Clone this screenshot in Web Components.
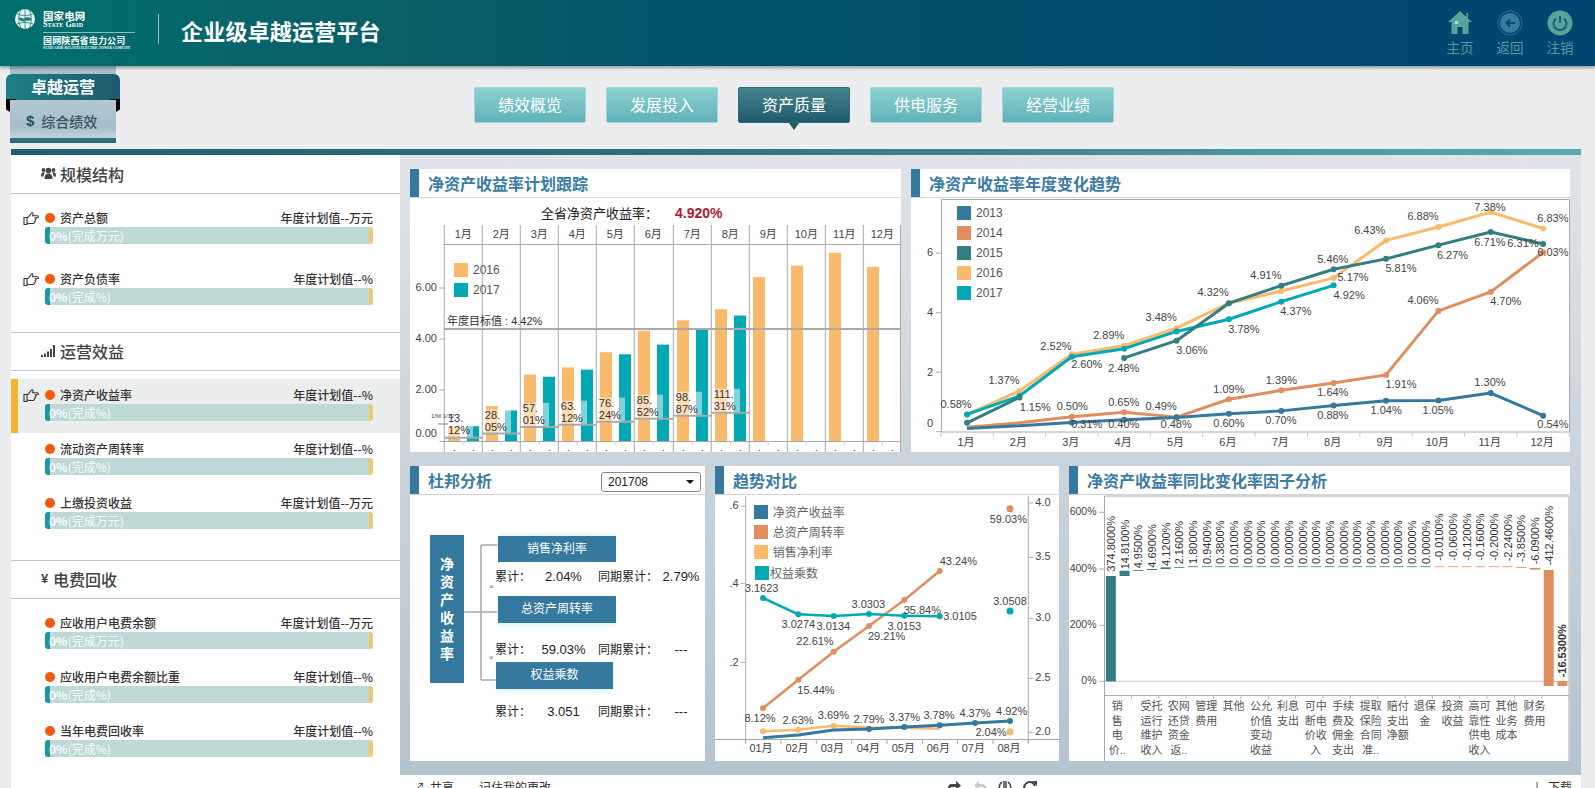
<!DOCTYPE html>
<html lang="zh-CN">
<head>
<meta charset="utf-8">
<title>企业级卓越运营平台</title>
<style>
  html, body { margin: 0; height: 788px; overflow: hidden; }
  body {
    background: #ebedef;
    color: #333;
    font-family: "Liberation Sans", "Noto Sans CJK SC", sans-serif;
    font-size: 12px;
  }
</style>
</head>
<body>
<app-header>
  <header-action icon="home">主页</header-action>
  <header-action icon="back">返回</header-action>
  <header-action icon="power">注销</header-action>
</app-header>

<top-bar>
  <side-ribbon slot="ribbon"></side-ribbon>
  <tab-button>绩效概览</tab-button>
  <tab-button>发展投入</tab-button>
  <tab-button active>资产质量</tab-button>
  <tab-button>供电服务</tab-button>
  <tab-button>经营业绩</tab-button>
</top-bar>

<page-body>
  <div slot="side">
    <kpi-section icon="group" style="--pad-top:1px;--pad-bottom:15px;--gap:7px">
      规模结构
      <kpi-item slot="items" hand name="资产总额" unit="万元"></kpi-item>
      <kpi-item slot="items" hand name="资产负债率" unit="%"></kpi-item>
    </kpi-section>
    <kpi-section icon="signal" style="--pad-bottom:19px">
      运营效益
      <kpi-item slot="items" hand active name="净资产收益率" unit="%"></kpi-item>
      <kpi-item slot="items" name="流动资产周转率" unit="%"></kpi-item>
      <kpi-item slot="items" name="上缴投资收益" unit="万元"></kpi-item>
    </kpi-section>
    <kpi-section icon="yen" style="--pad-bottom:0px">
      电费回收
      <kpi-item slot="items" name="应收用户电费余额" unit="万元"></kpi-item>
      <kpi-item slot="items" name="应收用户电费余额比重" unit="%"></kpi-item>
      <kpi-item slot="items" name="当年电费回收率" unit="%"></kpi-item>
    </kpi-section>
  </div>

  <chart-row style="--gap:10px">
    <chart-panel style="width:491px">
      <span slot="title">净资产收益率计划跟踪</span>
      <plan-chart></plan-chart>
    </chart-panel>
    <chart-panel style="width:659px">
      <span slot="title">净资产收益率年度变化趋势</span>
      <trend-chart></trend-chart>
    </chart-panel>
  </chart-row>
  <chart-row style="--gap:10px">
    <chart-panel style="width:295px">
      <span slot="title">杜邦分析</span>
      <period-select slot="tools">201708</period-select>
      <dupont-tree></dupont-tree>
    </chart-panel>
    <chart-panel style="width:344px">
      <span slot="title">趋势对比</span>
      <compare-chart></compare-chart>
    </chart-panel>
    <chart-panel style="width:501px">
      <span slot="title">净资产收益率同比变化率因子分析</span>
      <factor-chart></factor-chart>
    </chart-panel>
  </chart-row>
  <page-footer slot="footer"></page-footer>
</page-body>

<script>
// small helpers for the svg charts
const ORANGE = '#f9ba6b', TEAL = '#00a9b3', BLUE = '#35799f', BRICK = '#e08e5f', PINE = '#337e83';

function txt(x, y, s, o = {}) {
  const attrs = [
    `x="${x}"`, `y="${y}"`,
    `text-anchor="${o.anchor || 'middle'}"`,
    `font-size="${o.size || 11}"`,
    `fill="${o.fill || '#444'}"`,
    o.weight ? `font-weight="${o.weight}"` : '',
    o.rotate ? `transform="rotate(${o.rotate} ${x} ${y})"` : ''
  ].join(' ');
  return `<text ${attrs}>${s}</text>`;
}
const line = (x1, y1, x2, y2, c = '#aaa', w = 1) =>
  `<line x1="${x1}" y1="${y1}" x2="${x2}" y2="${y2}" stroke="${c}" stroke-width="${w}"/>`;
const rect = (x, y, w, h, c, extra = '') =>
  `<rect x="${x}" y="${y}" width="${w}" height="${h}" fill="${c}" ${extra}/>`;
const poly = (pts, c, w = 3) =>
  `<polyline points="${pts.map(p => p.join(',')).join(' ')}" fill="none" stroke="${c}" stroke-width="${w}" stroke-linejoin="round"/>`;
const dots = (pts, c, r = 3.5) =>
  pts.map(p => `<circle cx="${p[0]}" cy="${p[1]}" r="${r}" fill="${c}"/>`).join('');

const svgStyle = `
  :host { display: block; }
  svg { display: block; font-family: "Liberation Sans", "Noto Sans CJK SC", sans-serif; }
  text { dominant-baseline: central; }
`;

const ICONS = {
  home: `<svg width="26" height="26" viewBox="0 0 26 26"><path d="M13 1 1 12h3.500v12h6v-7h5v7h6V12H25l-4-3.600V3h-1.600v3.900z" fill="#5aa39b"/><rect x="8" y="11" width="3" height="3" fill="#a6e0d8"/></svg>`,
  back: `<svg width="26" height="26" viewBox="0 0 26 26"><circle cx="13" cy="13" r="12" fill="none" stroke="#2f6f92"/><circle cx="13" cy="13" r="10" fill="#3a7a9c"/><path d="M18 13H10M13 9.500 9.500 13l3.500 3.500" fill="none" stroke="#0d4a70" stroke-width="2"/></svg>`,
  power: `<svg width="26" height="26" viewBox="0 0 26 26"><circle cx="13" cy="13" r="12.500" fill="#5aa39b"/><path d="M9 8.500a6.500 6.500 0 1 0 8 0" fill="none" stroke="#14627a" stroke-width="2"/><path d="M13 6v7" stroke="#14627a" stroke-width="2"/></svg>`,
  group: `<svg width="15" height="13" viewBox="0 0 15 13"><g fill="#444"><circle cx="7.500" cy="3.500" r="2.800"/><path d="M3.500 12c0-3 1-5.500 4-5.500s4 2.500 4 5.500z"/><circle cx="2.500" cy="3" r="1.900"/><circle cx="12.500" cy="3" r="1.900"/><path d="M0 9c0-2 .6-3.800 2.500-3.800.5 0 1 .2 1.300.4C3 6.800 2.600 8 2.500 9.500H0zM15 9c0-2-.6-3.800-2.500-3.800-.5 0-1 .2-1.300.4.8 1.200 1.200 2.400 1.300 3.900H15z"/></g></svg>`,
  signal: `<svg width="15" height="12" viewBox="0 0 15 12"><g fill="#444"><rect x="0" y="10" width="2" height="2"/><rect x="3" y="8.500" width="2" height="3.500"/><rect x="6" y="6.500" width="2" height="5.500"/><rect x="9" y="4" width="2" height="8"/><rect x="12" y="0" width="2" height="12"/></g></svg>`
};

class AppHeader extends HTMLElement {
  constructor() {
    super();
    this.attachShadow({ mode: 'open' });
    this.shadowRoot.innerHTML = `
      <style>
        :host {
          display: flex; height: 66px; position: relative; z-index: 2;
          background: linear-gradient(90deg, #006f6e 0%, #0a5e67 25%, #01506b 50%, #004570 100%);
          box-shadow: 0 2px 3px rgba(0,0,0,.35);
          color: #fff; padding-left: 15px; box-sizing: border-box;
        }
        .logo { margin-top: 9px; }
        .brand { width: 92px; margin-left: 8px; display: flex; flex-direction: column; font-family: "Noto Sans CJK SC", sans-serif; }
        .cn { font-size: 10.500px; font-weight: 700; line-height: 11px; margin-top: 10px; letter-spacing: .1px; }
        .en { font: 700 8px/8px "Liberation Serif", serif; font-variant: small-caps; letter-spacing: .1px; }
        .rule { border-top: 1px solid rgba(255,255,255,.55); margin-top: 3px; }
        .co { font-size: 9px; font-weight: 700; line-height: 11px; margin-top: 2px; letter-spacing: .15px; white-space: nowrap; }
        .co-en { font: 700 3.400px/5px "Liberation Serif", serif; white-space: nowrap; }
        .sep { width: 1px; height: 30px; margin: 14px 22px 0 23px; background: rgba(255,255,255,.6); }
        h1 { margin: 15px 0 0; font: 700 22px/30px "Noto Sans CJK SC", sans-serif; letter-spacing: .2px; }
        .actions { margin-left: auto; padding-right: 10px; display: flex; }
      </style>
      <svg class="logo" width="20" height="20" viewBox="0 0 20 20">
        <circle cx="10" cy="10" r="10" fill="#e8f2ef"/>
        <path d="M10 0v20M2 5c5 2 11 2 16 0M2 15c5-2 11-2 16 0M6 1c-3 5-3 13 0 18M14 1c3 5 3 13 0 18" fill="none" stroke="#1e7f7d" stroke-width=".8"/>
        <path d="M3 9c3-2 5 2 7 0s4-1 7 1c-3 3-5 1-7 2s-4 1-7-3z" fill="#1e7f7d"/>
      </svg>
      <div class="brand">
        <span class="cn">国家电网</span>
        <span class="en">State Grid</span>
        <span class="rule"></span>
        <span class="co">国网陕西省电力公司</span>
        <span class="co-en">STATE GRID SHAANXI ELECTRIC POWER COMPANY</span>
      </div>
      <span class="sep"></span>
      <h1>企业级卓越运营平台</h1>
      <div class="actions"><slot></slot></div>
    `;
  }
}
customElements.define('app-header', AppHeader);

class HeaderAction extends HTMLElement {
  constructor() {
    super();
    this.attachShadow({ mode: 'open' });
  }
  connectedCallback() {
    this.shadowRoot.innerHTML = `
      <style>
        :host { display: flex; flex-direction: column; align-items: center; width: 50px; padding-top: 10px; box-sizing: border-box;
          color: #4f9d9d; font: 13.500px/18px "Noto Sans CJK SC", sans-serif; }
        svg { display: block; margin-bottom: 2px; }
      </style>
      ${ICONS[this.getAttribute('icon')]}
      <slot></slot>
    `;
  }
}
customElements.define('header-action', HeaderAction);

class TopBar extends HTMLElement {
  constructor() {
    super();
    this.attachShadow({ mode: 'open' });
    this.shadowRoot.innerHTML = `
      <style>
        :host { display: flex; height: 83px; }
        .ribbon { width: 120px; flex: none; }
        nav { display: flex; gap: 20px; margin: 21px 0 0 354px; }
      </style>
      <div class="ribbon"><slot name="ribbon"></slot></div>
      <nav><slot></slot></nav>
    `;
  }
}
customElements.define('top-bar', TopBar);

class SideRibbon extends HTMLElement {
  constructor() {
    super();
    this.attachShadow({ mode: 'open' });
    this.shadowRoot.innerHTML = `
      <style>
        :host { display: block; margin-left: 6px; width: 114px; font-family: "Noto Sans CJK SC", sans-serif; }
        .fold { height: 8px; margin: 0 4px; background: #a7bfc8; }
        .tab {
          position: relative; height: 36px; border-radius: 6px 6px 0 0;
          background: linear-gradient(90deg, #1d8086, #1f5a6c);
          color: #fff; font-size: 16px; font-weight: 700; text-align: center; line-height: 25px;
        }
        .tab::before, .tab::after {
          content: ''; position: absolute; bottom: -2px; width: 10px; height: 13px; background: #000; border-radius: 0 0 6px 6px;
        }
        .tab::before { left: 0; }
        .tab::after { right: 0; }
        .sub {
          position: relative; margin: -10px 4px 0; height: 43px; box-sizing: border-box; padding: 0 0 2px 16px;
          display: flex; align-items: center; gap: 7px;
          background: linear-gradient(180deg, #b3c7d3 0, #a7bfcb 65%, #c5d4db 88%, #1f7b84 88%, #27657a 100%);
          color: #3c5560; font-size: 14px; font-weight: 500;
        }
        .sub b { font: 700 15px "Liberation Sans", sans-serif; color: #24505f; }
      </style>
      <div class="fold"></div>
      <div class="tab">卓越运营</div>
      <div class="sub"><b>$</b><span>综合绩效</span></div>
    `;
  }
}
customElements.define('side-ribbon', SideRibbon);

class TabButton extends HTMLElement {
  constructor() {
    super();
    this.attachShadow({ mode: 'open' });
    this.shadowRoot.innerHTML = `
      <style>
        :host {
          display: block; position: relative; width: 112px; height: 36px; box-sizing: border-box;
          background: linear-gradient(180deg, #8cd2d4, #61b1b6);
          border: 1px solid #a0d6d8; border-radius: 2px;
          color: #fff; font: 16px/33px "Noto Sans CJK SC", sans-serif; text-align: center;
        }
        :host([active]) { background: linear-gradient(180deg, #46848f, #1f5a6a); border-color: #2e6a78; }
        :host([active])::after {
          content: ''; position: absolute; left: 50%; bottom: -8px; margin-left: -5px;
          border: 5px solid transparent; border-bottom: 0; border-top: 7px solid #1f5a6a;
        }
      </style>
      <slot></slot>
    `;
  }
}
customElements.define('tab-button', TabButton);

class PageBody extends HTMLElement {
  constructor() {
    super();
    this.attachShadow({ mode: 'open' });
    this.shadowRoot.innerHTML = `
      <style>
        :host { display: block; margin-left: 11px; width: 1570px; }
        .accent { height: 6px; background: linear-gradient(90deg, #1f5f70, #2f6f7c 40%, #5aabab); }
        .cols { display: flex; height: 633px; }
        .side { width: 389px; flex: none; background: #fff; height: 100%; }
        .main { flex: 1; min-width: 0; display: flex; flex-direction: column; }
        .board {
          height: 620px; box-sizing: border-box; padding: 14px 11px 14px 10px;
          display: flex; flex-direction: column; gap: 14px;
          background: linear-gradient(180deg, #e0e4e8, #b5c3ce);
        }
      </style>
      <div class="accent"></div>
      <div class="cols">
        <div class="side"><slot name="side"></slot></div>
        <div class="main">
          <div class="board"><slot></slot></div>
          <slot name="footer"></slot>
        </div>
      </div>
    `;
  }
}
customElements.define('page-body', PageBody);

class KpiSection extends HTMLElement {
  constructor() {
    super();
    this.attachShadow({ mode: 'open' });
  }
  connectedCallback() {
    const kind = this.getAttribute('icon');
    const icon = kind === 'yen' ? '<b class="yen">¥</b>' : ICONS[kind];
    this.shadowRoot.innerHTML = `
      <style>
        :host { display: block; padding: var(--pad-top, 0) 0 var(--pad-bottom, 0); border-bottom: 1px solid #bcc8cc; }
        :host(:last-child) { border-bottom: 0; }
        h2 {
          margin: 0; height: 38px; box-sizing: border-box; padding: 0 0 2px 30px; display: flex; align-items: center; gap: 4px;
          border-bottom: 1px solid #bcc8cc; color: #444; font: 500 16px/22px "Noto Sans CJK SC", sans-serif;
        }
        .yen { font: 700 13px "Liberation Sans", sans-serif; width: 9px; margin-right: -1px; }
        .items { display: flex; flex-direction: column; gap: var(--gap, 0); padding-top: 8px; }
      </style>
      <h2>${icon}<slot></slot></h2>
      <div class="items"><slot name="items"></slot></div>
    `;
  }
}
customElements.define('kpi-section', KpiSection);

class KpiItem extends HTMLElement {
  constructor() {
    super();
    this.attachShadow({ mode: 'open' });
  }
  connectedCallback() {
    const name = this.getAttribute('name');
    const unit = this.getAttribute('unit');
    const hand = this.hasAttribute('hand') ? `<svg width="16" height="14" viewBox="0 0 16 14"><path d="M1 6.500h3v7H1zM4 7c2-.5 3-3 4-4.500C8.700 1.300 10.300 1.500 10 3.200L9.600 4.700h4.700c1.500 0 1.500 2.100 0 2.100h-1.800c.8.700.5 1.800-.3 2 .5.800 0 1.800-.8 1.900.2.900-.3 1.800-1.400 1.800H7c-1.200 0-2-.5-3-.5z" fill="none" stroke="#333" stroke-width="1.100"/></svg>` : '';
    this.shadowRoot.innerHTML = `
      <style>
        :host {
          display: block; height: 54px; box-sizing: border-box; padding: 7px 27px 0 0;
          font: 500 12px/18px "Noto Sans CJK SC", sans-serif; color: #333;
        }
        :host([active]) { background: #eceeee; box-shadow: inset 7px 0 0 #fcb130; }
        .row { display: flex; align-items: center; height: 18px; }
        .hand { width: 22px; margin-left: 12px; flex: none; display: flex; }
        .dot { width: 10px; height: 10px; border-radius: 50%; background: #f05a0e; margin-right: 5px; }
        .plan { margin-left: auto; }
        .bar {
          margin-left: 34px; height: 17px; border-radius: 3px; padding-left: 4px;
          background:
            linear-gradient(90deg, #1a97a0 5px, transparent 5px),
            linear-gradient(270deg, #f0c870 4px, transparent 4px),
            #bfd9d6;
          color: #f7fcfb; font-weight: 400; line-height: 18px;
        }
      </style>
      <div class="row">
        <span class="hand">${hand}</span>
        <span class="dot"></span>
        <span>${name}</span>
        <span class="plan">年度计划值--${unit}</span>
      </div>
      <div class="bar"><b>0%</b>(完成${unit})</div>
    `;
  }
}
customElements.define('kpi-item', KpiItem);

class ChartRow extends HTMLElement {
  constructor() {
    super();
    this.attachShadow({ mode: 'open' });
    this.shadowRoot.innerHTML = `
      <style>:host { display: flex; gap: var(--gap, 10px); }</style>
      <slot></slot>
    `;
  }
}
customElements.define('chart-row', ChartRow);

class ChartPanel extends HTMLElement {
  constructor() {
    super();
    this.attachShadow({ mode: 'open' });
    this.shadowRoot.innerHTML = `
      <style>
        :host { display: block; flex: none; background: #fff; box-sizing: border-box; }
        header {
          height: 29px; box-sizing: border-box; border-bottom: 1px solid #cfd6da;
          display: flex; align-items: flex-start;
        }
        .mark { width: 9px; height: 28px; background: ${BLUE}; flex: none; }
        h3 { margin: 0 0 0 9px; font: 700 16px/29px "Noto Sans CJK SC", sans-serif; color: #3c7ca3; }
        .tools { margin-left: auto; padding: 6px 4px 0 0; }
      </style>
      <header>
        <span class="mark"></span>
        <h3><slot name="title"></slot></h3>
        <div class="tools"><slot name="tools"></slot></div>
      </header>
      <slot></slot>
    `;
  }
}
customElements.define('chart-panel', ChartPanel);

class PeriodSelect extends HTMLElement {
  constructor() {
    super();
    this.attachShadow({ mode: 'open' });
    this.shadowRoot.innerHTML = `
      <style>
        :host {
          display: flex; align-items: center; justify-content: space-between;
          width: 100px; height: 20px; box-sizing: border-box; padding: 0 6px;
          border: 1px solid #888; border-radius: 3px; background: #fff;
          font: 12px "Liberation Sans", sans-serif; color: #222;
        }
        i { border: 4px solid transparent; border-top: 4px solid #111; border-bottom: 0; }
      </style>
      <slot></slot><i></i>
    `;
  }
}
customElements.define('period-select', PeriodSelect);

class PlanChart extends HTMLElement {
  constructor() {
    super();
    this.attachShadow({ mode: 'open' });
    const col = [34.3, 72.3, 110.3, 148.3, 186.3, 224.3, 263.3, 301.3, 339.3, 377.3, 415.3, 453.3, 490.5];
    const y0 = 243, k = 25.5;
    const v16 = [0.58, 1.37, 2.60, 2.89, 3.48, 4.32, 4.73, 5.17, 6.43, 6.88, 7.38, 6.83];
    const v17 = [0.58, 1.2, 2.52, 2.80, 3.40, 3.78, 4.37, 4.92];
    const progress = [null, ['28.', '05%'], ['57.', '01%'], ['63.', '12%'], ['76.', '24%'], ['85.', '52%'], ['98.', '87%'], ['111.', '31%']];
    const barY = [239.700, 235.600, 229, 226.700, 223.700, 220.700, 217.700, 214.700];
    let s = '';
    // bars
    v16.forEach((v, i) => { s += rect(col[i] + 3.7, y0 - v * k, 12, v * k, ORANGE); });
    v17.forEach((v, i) => { s += rect(col[i] + 22.7, y0 - v * k, 12, v * k, TEAL); });
    // grid
    col.forEach(x => { s += line(x, 27, x, 254); });
    s += line(34, 46.5, 491, 46.5);
    s += line(34, 243.5, 491, 243.5);
    col.slice(0, 12).forEach((x, i) => {
      s += txt(x + 19, 36, `${i + 1}月`);
      s += line(x + 19, 243, x + 19, 247, '#ccc');
      s += txt(x + 10, 249, '.', { size: 10 }) + txt(x + 29, 249, '.', { size: 10 });
    });
    // y axis
    [[6, '6.00'], [4, '4.00'], [2, '2.00']].forEach(([v, l]) => {
      s += txt(27, y0 - v * k - 1, l, { anchor: 'end' });
      s += line(29.500, y0 - v * k, 34, y0 - v * k);
    });
    s += txt(27, 235, '0.00', { anchor: 'end' });
    s += line(29.500, 243.5, 34, 243.5);
    // progress of each month against the target
    barY.forEach((y, i) => {
      s += rect(col[i] + 3.7, y - 24, 25, 24, '#fff', 'opacity=".5"');
      s += line(col[i], y, col[i + 1], y, '#aaa', 2);
      if (progress[i]) {
        s += txt(col[i] + 2.500, y - 19, progress[i][0], { anchor: 'start', fill: '#333' });
        s += txt(col[i] + 2.500, y - 7, progress[i][1], { anchor: 'start', fill: '#333' });
      }
    });
    s += txt(38, 220, '13.', { anchor: 'start', fill: '#333' }) + txt(38, 232, '12%', { anchor: 'start', fill: '#333' });
    s += txt(21, 217.500, '1/M 1/12', { anchor: 'start', size: 6 });
    s += line(28, 226, 38, 226, '#888');
    // target line
    s += line(34, 131, 491, 131, '#aaa', 2);
    s += txt(37, 123, '年度目标值 : 4.42%', { anchor: 'start', size: 11, fill: '#333' });
    // header + legend
    s += txt(131, 15, '全省净资产收益率：', { anchor: 'start', size: 13, fill: '#222' });
    s += txt(265, 15, '4.920%', { anchor: 'start', size: 14, weight: 700, fill: '#b5182e' });
    s += rect(44, 65, 14, 14, ORANGE) + txt(63, 72, '2016', { anchor: 'start', size: 12, fill: '#555' });
    s += rect(44, 85, 14, 14, TEAL) + txt(63, 92, '2017', { anchor: 'start', size: 12, fill: '#555' });
    this.shadowRoot.innerHTML = `<style>${svgStyle}</style><svg width="491" height="254" viewBox="0 0 491 254">${s}</svg>`;
  }
}
customElements.define('plan-chart', PlanChart);

class TrendChart extends HTMLElement {
  constructor() {
    super();
    this.attachShadow({ mode: 'open' });
    const X = i => 56.06 + 52.37 * i;
    const Y = v => 233.700 - 29.75 * v;
    const pts = (arr, from = 0) => arr.map((v, i) => [X(i + from), Y(v)]);
    let s = '';
    s += line(30.5, 1.5, 658.5, 1.5) + line(30.5, 1.5, 30.5, 234) + line(658.5, 1.5, 658.5, 234) + line(30.5, 234, 658.5, 234);
    [[6, 54.3], [4, 113.7], [2, 173.7], [0, 225]].forEach(([v, y]) => {
      s += txt(22, y, v, { anchor: 'end' });
      s += line(25, Y(v), 30.5, Y(v));
    });
    for (let i = 0; i <= 12; i++) {
      const x = X(i) - 26.2;
      s += line(x, 234, x, 239, '#ccc');
    }
    for (let i = 0; i < 12; i++) s += txt(X(i) - 1, 244, `${i + 1}月`);

    const y13 = pts([.11, .2, .31, .40, .48, .60, .70, .88, 1.04, 1.05, 1.30, .54]);
    const y14 = pts([.15, .3, .50, .65, .49, 1.09, 1.39, 1.64, 1.91, 4.06, 4.70, 6.03]);
    const y15a = pts([.3, 1.15]);
    const y15b = pts([2.48, 3.06, 4.32, 4.91, 5.46, 5.81, 6.27, 6.71, 6.31], 3);
    const y16 = pts([.58, 1.37, 2.60, 2.89, 3.48, 4.32, 4.73, 5.17, 6.43, 6.88, 7.38, 6.83]);
    const y17 = pts([.58, 1.2, 2.52, 2.79, 3.37, 3.78, 4.37, 4.92]);
    s += poly(y16, ORANGE) + dots(y16, ORANGE, 3);
    s += poly(y17, TEAL) + dots(y17, TEAL, 3);
    s += poly(y14, BRICK) + dots(y14.filter((p, i) => i !== 1 && i !== 0), BRICK, 3);
    s += poly(y15a, PINE) + dots(y15a, PINE, 3);
    s += poly(y15b, PINE) + dots(y15b, PINE, 3);
    s += poly(y13, BLUE) + dots(y13.filter((p, i) => i > 1), BLUE, 3);

    const labels = [
      ['0.58%',116,718],['1.37%',225,646],['1.15%',296,726],['0.50%',380,723],['2.52%',343,543],['2.60%',413,597],['0.31%',413,777],
      ['2.89%',463,510],['0.65%',497,711],['2.48%',497,609],['0.40%',497,777],['3.48%',582,456],['0.49%',582,723],['3.06%',652,555],
      ['0.48%',616,777],['4.32%',700,381],['1.09%',736,672],['3.78%',770,491],['0.60%',736,775],['4.91%',820,330],['1.39%',855,645],
      ['4.37%',888,438],['0.70%',854,765],['5.46%',972,282],['5.17%',1018,336],['4.92%',1009,390],['1.64%',972,681],['0.88%',972,750],
      ['6.43%',1056,195],['5.81%',1127,309],['1.91%',1127,657],['1.04%',1093,735],['6.88%',1177,153],['6.27%',1244,270],['4.06%',1177,405],
      ['1.05%',1211,735],['7.38%',1329,126],['6.71%',1329,231],['4.70%',1365,408],['1.30%',1329,651],['6.83%',1472,159],['6.31%',1404,234],
      ['6.03%',1472,261],['0.54%',1472,777]
    ];
    labels.forEach(([t, zx, zy]) => { s += txt(zx / 2.272 - 6, zy / 3 - 33, t); });

    [['2013', BLUE], ['2014', BRICK], ['2015', PINE], ['2016', ORANGE], ['2017', TEAL]].forEach(([t, c], i) => {
      s += rect(46, 8 + i * 20, 14, 14, c) + txt(65, 15 + i * 20, t, { anchor: 'start', size: 12, fill: '#555' });
    });
    this.shadowRoot.innerHTML = `<style>${svgStyle}</style><svg width="659" height="254" viewBox="0 0 659 254">${s}</svg>`;
  }
}
customElements.define('trend-chart', TrendChart);

class DupontTree extends HTMLElement {
  constructor() {
    super();
    this.attachShadow({ mode: 'open' });
    const stat = (top, a, b) => `
      <div class="stat" style="top:${top}px">
        <span>累计：</span><span class="num">${a}</span><span class="l2">同期累计：</span><span class="num">${b}</span>
      </div>`;
    this.shadowRoot.innerHTML = `
      <style>
        :host { display: block; position: relative; height: 266px; font: 12px "Liberation Sans", "Noto Sans CJK SC", sans-serif; color: #222; }
        .root {
          position: absolute; left: 20px; top: 40px; width: 34px; height: 148px; background: ${BLUE};
          color: #fff; font-weight: 700; font-size: 14px; line-height: 18px; text-align: center;
          display: flex; align-items: center; justify-content: center; padding: 0 10px; box-sizing: border-box;
        }
        .node {
          position: absolute; height: 26px; line-height: 26px; text-align: center; color: #fff; background: ${BLUE};
          box-shadow: 0 -3px 3px #e6f8fb;
        }
        .node.low { box-shadow: 0 3px 3px #dff6fa; }
        .stat { position: absolute; left: 85px; height: 18px; line-height: 18px; display: grid; grid-template-columns: 40px 57px 70px 38px; white-space: nowrap; }
        .num { font-size: 13px; text-align: center; }
        .l2 { padding-left: 6px; }
        .x { position: absolute; left: 79px; font-size: 8px; line-height: 8px; color: #666; }
        svg { position: absolute; left: 0; top: 0; }
      </style>
      <svg width="100" height="200" viewBox="0 0 100 200">
        <path d="M54 117H71M71 50V185M71 50H88M71 185H86M71 117H88" fill="none" stroke="#aaa" stroke-width="1.500"/>
      </svg>
      <div class="root"><span>净资产收益率</span></div>
      <div class="node" style="left:88px;top:41px;width:118px">销售净利率</div>
      <div class="node low" style="left:88px;top:101px;width:118px;height:27px;line-height:27px">总资产周转率</div>
      <div class="node low" style="left:86px;top:167px;width:117px;height:27px;line-height:27px">权益乘数</div>
      ${stat(73, '2.04%', '2.79%')}
      ${stat(146, '59.03%', '---')}
      ${stat(208, '3.051', '---')}
      <span class="x" style="top:88px">×</span>
      <span class="x" style="top:159px">×</span>
    `;
  }
}
customElements.define('dupont-tree', DupontTree);

class CompareChart extends HTMLElement {
  constructor() {
    super();
    this.attachShadow({ mode: 'open' });
    const P = (zx, zy) => [zx / 3 - 5, zy / 3 - 35];
    const xs = [159, 265, 371, 477, 583, 689, 795, 900];
    const ser = (ys) => ys.map((y, i) => P(xs[i], y));
    let s = '';
    s += line(30.7, 1, 30.7, 248) + line(313.3, 1, 313.3, 248) + line(0, 244.5, 344, 244.5);
    [['.6', 135, 138], ['.4', 368, 370], ['.2', 605, 607]].forEach(([t, ly, ty]) => {
      s += txt(19, ly / 3 - 35, t, { anchor: 'middle' }) + line(26, ty / 3 - 35, 30.7, ty / 3 - 35);
    });
    [['4.0', 126], ['3.5', 289], ['3.0', 472], ['2.5', 652], ['2.0', 814]].forEach(([t, y]) => {
      s += txt(328, y / 3 - 35, t) + line(313.3, y / 3 - 34, 318, y / 3 - 34);
    });
    for (let i = 0; i <= 8; i++) { const x = 107 + 106 * i; s += line(x / 3 - 5, 244, x / 3 - 5, 249); }
    ['01月', '02月', '03月', '04月', '05月', '06月', '07月', '08月'].forEach((t, i) => {
      s += txt([153, 261, 367, 475, 580, 685, 790, 897][i] / 3 - 5, 252.500, t);
    });
    const light = ser([814, 809, 797, 803, 803, 806]);
    const brick = ser([745, 659, 575, 498, 420, 333]);
    const teal = ser([414, 463, 468, 462, 467, 469]);
    const blue = ser([833, 825, 810, 807, 801, 796, 789, 783]);
    s += poly(light, ORANGE, 2.5) + dots(light.slice(0, 3), ORANGE, 3) + dots([P(900, 815)], ORANGE, 3.5);
    s += poly(brick, BRICK, 2.5) + dots(brick, BRICK, 3) + dots([P(900, 146)], BRICK, 3.5);
    s += poly(teal, TEAL, 2.5) + dots(teal, TEAL, 3) + dots([P(900, 453)], TEAL, 3.5);
    s += poly(blue, BLUE, 3) + dots(blue.slice(3), BLUE, 3);
    const labels = [
      ['8.12%',150,775],['2.63%',264,780],['3.69%',370,765],['2.79%',477,777],['3.37%',583,771],['3.78%',687,765],['4.37%',795,760],
      ['4.92%',905,753],['2.04%',843,816],['15.44%',318,690],['22.61%',315,544],['29.21%',530,528],['35.84%',637,450],['43.24%',745,303],
      ['59.03%',895,178],['3.1623',155,384],['3.0274',265,492],['3.0134',370,498],['3.0303',475,432],['3.0153',583,497],['3.0105',750,468],['3.0508',900,423]
    ];
    labels.forEach(([t, zx, zy]) => { const p = P(zx, zy); s += txt(p[0], p[1], t); });
    [['净资产收益率', BLUE, 135, 188, 39], ['总资产周转率', BRICK, 195, 188, 39], ['销售净利率', ORANGE, 255, 188, 39], ['权益乘数', TEAL, 318, 180, 40]].forEach(([t, c, zy, zx, l]) => {
      s += rect(l, zy / 3 - 35, 14, 14, c) + txt(zx / 3 - 5, zy / 3 - 35 + 7.500, t, { anchor: 'start', size: 12, fill: '#666' });
    });
    this.shadowRoot.innerHTML = `<style>${svgStyle}</style><svg width="344" height="266" viewBox="0 0 344 266">${s}</svg>`;
  }
}
customElements.define('compare-chart', CompareChart);

class FactorChart extends HTMLElement {
  constructor() {
    super();
    this.attachShadow({ mode: 'open' });
    const X = zx => zx / 2.96 - 4;
    const Y = zy => zy / 3 - 35;
    const labels = ['374.8000','14.8100','4.9500','4.6900','4.1200','2.1600','1.8000','0.9400','0.3800','0.0100',
      ...Array(14).fill('0.0000'),
      '-0.0100','-0.0600','-0.1200','-0.1600','-0.2000','-2.2400','-3.8500','-6.0900','-412.4600','-16.5300'];
    const spans = [[348,664],[332,348],[330,332],[327,330],[322,327],[321,323]];
    const bottoms = [335,328,325,323,318,313];
    let s = '';
    s += line(35.5, 1, 500, 1) + line(500, 1, 500, 266) + line(35.5, 1, 35.5, 266) + line(35.5, 200.5, 500, 200.5);
    s += `<line x1="35.5" y1="186.300" x2="500" y2="186.300" stroke="#888" stroke-dasharray="1 1"/>`;
    [['600%', 153, 157], ['400%', 323, 327], ['200%', 493, 496], ['0%', 661, 664]].forEach(([t, ly, ty]) => {
      s += txt(27.5, Y(ly), t, { anchor: 'end', size: 10.5 }) + line(30, Y(ty), 35.5, Y(ty));
    });
    labels.forEach((t, i) => {
      const c = 136 + 40.5 * i;
      const neg = i >= 24;
      let span = spans[i] || [319, 321];
      if (i === 30) span = [321, 323];
      if (i === 31) span = [324, 329];
      if (i === 32) span = [330, 678];
      if (i === 33) span = [663, 678];
      s += rect(X(c - 15), Y(span[0]), 10, Math.max(Y(span[1]) - Y(span[0]), .8), neg ? BRICK : PINE);
      let b = bottoms[i] || 312;
      if (i >= 24 && i < 29) b = 302;
      if (i === 29) b = 304; if (i === 30) b = 306; if (i === 31) b = 313; if (i === 32) b = 316;
      if (i === 33) b = 652;
      s += txt(X(c), Y(b), t + '%', { anchor: 'start', size: 11, rotate: -90, fill: '#333', weight: i === 33 ? 700 : 0 });
      if (i % 2 === 1) s += line(X(c + 20), 200, X(c + 20), 204, '#bbb');
    });
    const cats = [
      [155, ['销', '售', '电', '价..']], [256, ['受托', '运行', '维护', '收入']], [337, ['农网', '还贷', '资金', '返..']],
      [418, ['管理', '费用']], [499, ['其他']], [580, ['公允', '价值', '变动', '收益']], [660, ['利息', '支出']],
      [742, ['可中', '断电', '价收', '入']], [823, ['手续', '费及', '佣金', '支出']], [905, ['提取', '保险', '合同', '准..']],
      [985, ['赔付', '支出', '净额']], [1065, ['退保', '金']], [1147, ['投资', '收益']], [1227, ['高可', '靠性', '供电', '收入']],
      [1307, ['其他', '业务', '成本']], [1390, ['财务', '费用']]
    ];
    cats.forEach(([zx, rows]) => {
      rows.forEach((t, r) => { s += txt(X(zx), Y(738 + 44 * r), t, { fill: '#555', size: 11 }); });
    });
    this.shadowRoot.innerHTML = `<style>${svgStyle}</style><svg width="501" height="266" viewBox="0 0 501 266">${s}</svg>`;
  }
}
customElements.define('factor-chart', FactorChart);

class PageFooter extends HTMLElement {
  constructor() {
    super();
    this.attachShadow({ mode: 'open' });
    this.shadowRoot.innerHTML = `
      <style>
        :host {
          display: grid; grid-template-columns: 1fr auto 1fr; height: 13px; overflow: hidden; background: #fff; color: #333; padding: 5px 9px 0 13px; box-sizing: border-box;
          font: 12px/14px "Noto Sans CJK SC", sans-serif;
        }
        .left { display: flex; gap: 25px; }
        .left span:first-child { display: flex; gap: 5px; }
        .mid { display: flex; gap: 11px; align-items: flex-start; }
        .right { justify-self: end; display: flex; gap: 5px; }
        svg { display: block; }
      </style>
      <div class="left"><span><span>↗</span>共享</span><span>记住我的更改</span></div>
      <div class="mid">
        <svg width="14" height="14" viewBox="0 0 14 14"><path d="M8 1l5 4.500L8 10V7H4a2 2 0 0 0-2 2v3H0V8a4 4 0 0 1 4-4h4z" fill="#444"/></svg>
        <svg width="14" height="14" viewBox="0 0 14 14"><path d="M6 1 1 5.500 6 10V7h3a3 3 0 0 1 3 3v3h2V9a5 5 0 0 0-5-5H6z" fill="#ccc"/></svg>
        <svg width="14" height="14" viewBox="0 0 14 14"><path d="M4 2a6 6 0 0 0 0 10M10 2a6 6 0 0 1 0 10M6 1v12M8 1v12" fill="none" stroke="#444" stroke-width="1.500"/></svg>
        <svg width="14" height="14" viewBox="0 0 14 14"><path d="M12 6a5.500 5.500 0 1 0 0 3" fill="none" stroke="#444" stroke-width="2"/><path d="M9 1l5 0 0 5z" fill="#444"/></svg>
      </div>
      <div class="right"><span>↓</span>下载</div>
    `;
  }
}
customElements.define('page-footer', PageFooter);
</script>
</body>
</html>
